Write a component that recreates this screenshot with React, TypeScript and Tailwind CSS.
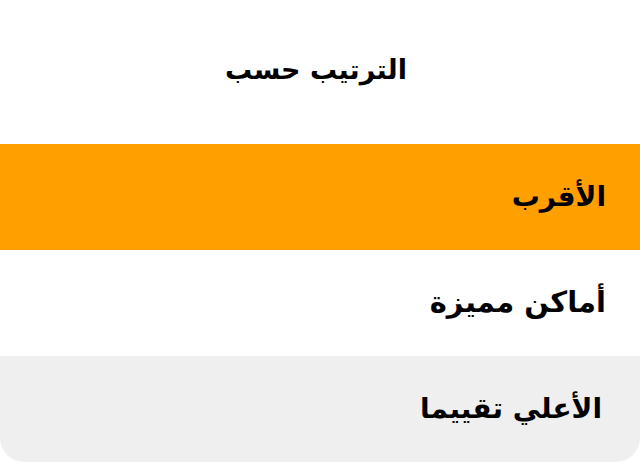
import React from "react";

export default function App() {
  const font = { fontFamily: '"DejaVu Sans", sans-serif' };
  return (
    <div dir="rtl" className="w-[640px] h-[462px] bg-white overflow-hidden" style={font}>
      <div className="h-[144px] flex items-center justify-center pb-[4px] pr-[8px]">
        <span className="text-[27px] font-bold text-black">الترتيب حسب</span>
      </div>
      <div className="h-[106px] bg-[#ffa000] flex items-center pr-[34px]">
        <span className="text-[28px] font-bold text-black">الأقرب</span>
      </div>
      <div className="h-[106px] bg-white flex items-center pr-[34px]">
        <span className="text-[29px] font-bold text-black">أماكن مميزة</span>
      </div>
      <div className="h-[106px] bg-[#efefef] flex items-center pr-[38px] rounded-b-[24px]">
        <span className="text-[28px] font-bold text-black">الأعلي تقييما</span>
      </div>
    </div>
  );
}
